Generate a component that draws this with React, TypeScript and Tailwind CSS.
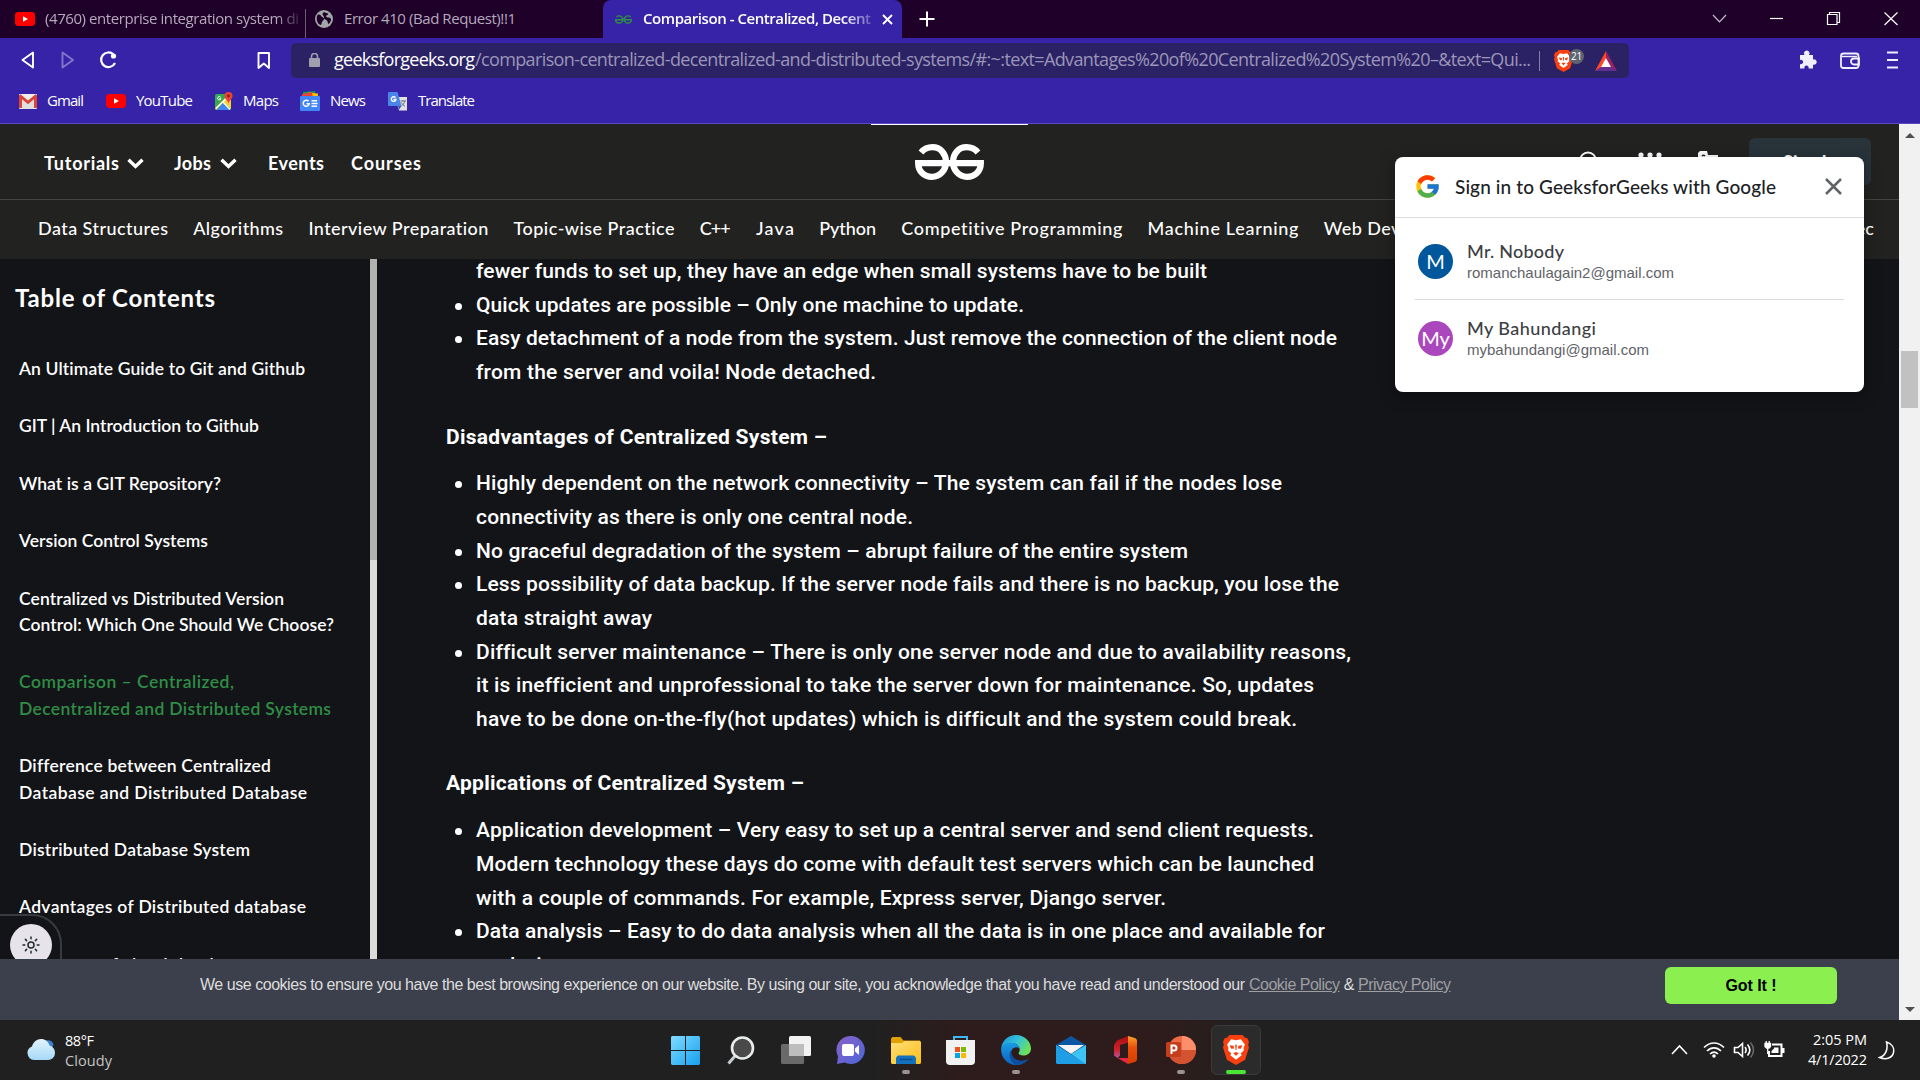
import { useLayoutEffect, useRef } from "react";
import { SiGeeksforgeeks } from "react-icons/si";
import { FcGoogle } from "react-icons/fc";

/** A single line of text whose tracking is adjusted so that it fills exactly `w` pixels. */
function Fit({ t, w, className = "" }: { t: string; w: number; className?: string }) {
  const outer = useRef<HTMLSpanElement>(null);
  const inner = useRef<HTMLSpanElement>(null);
  useLayoutEffect(() => {
    const el = inner.current;
    if (!el || !outer.current) return;
    el.style.letterSpacing = "0px";
    const natural = el.getBoundingClientRect().width;
    el.style.letterSpacing = `${(w - natural) / Math.max(1, t.length - 1)}px`;
    outer.current.style.width = `${w}px`;
  }, [t, w]);
  return (
    <span ref={outer} className={`block shrink-0 whitespace-pre ${className}`}>
      <span ref={inner} className="[font-variant-ligatures:none]">
        {t}
      </span>
    </span>
  );
}

function YouTubeIcon() {
  return (
    <svg className="h-[14px] w-5 shrink-0" viewBox="0 0 20 14">
      <rect width="20" height="14" rx="3.4" fill="#ff0000" />
      <path d="M8 4.2v5.6L13 7z" fill="#fff" />
    </svg>
  );
}

function BraveLion({ className }: { className: string }) {
  return (
    <svg className={className} viewBox="0 0 24 28" preserveAspectRatio="none">
      <path d="M6 0h12l2.300 2.600 2 .2L24 6.500l-.8 2.600.8 2.500-3.600 11.600L12 28l-8.400-4.800L0 11.600l.8-2.500L0 6.500l1.700-3.700 2-.2z" fill="#fb4010" />
      <path d="M12 5l4.500-1 3.700 4.800-1.200 3.400.3 2-3 3 1 1.800L12 23l-5.300-4 1-1.800-3-3 .3-2L3.800 8.800 7.500 4z" fill="#fff" />
      <path d="M6 9.500l3.800.6.4 2.400-2.600.4zM18 9.500l-3.800.6-.4 2.400 2.600.4zM9.300 17l2.700-1.200 2.700 1.200L12 19.300zM11.200 9h1.600l-.4 5h-.8z" fill="#fb4010" />
    </svg>
  );
}

function TabStrip() {
  return (
    <div className="flex h-[38px] bg-[#1e0029] text-[15px] leading-[36px] text-[#b5a9bd]">
      <div className="flex w-[305px] items-center pl-[15px]">
        <YouTubeIcon />
        <div className="ml-[10px] h-[38px] w-[254px] overflow-hidden [mask-image:linear-gradient(to_right,#000_91%,rgba(0,0,0,.2))]">
          <Fit t="(4760) enterprise integration system di" w={254} />
        </div>
      </div>
      <div className="mt-[9px] w-px bg-[#6c5c74]" />
      <div className="flex w-[297px] items-center pl-[9px]">
        <svg className="h-[18px] w-[18px] shrink-0" viewBox="0 0 18 18">
          <circle cx="9" cy="9" r="9" fill="#a3a6a8" />
          <path d="M3 4.500c1.500 0 3 .5 3.500 2 .5 1 2 .5 2.500 2s-1.500 2-2 3.500-.5 3-1.500 3C3 14 1.500 11 1.700 8c0-1.500.5-2.500 1.300-3.500zM9.500 2c1 1.200 2.800.8 3.500 1.500s-.2 1.500-1.500 2 0 2 1.500 2 2.500.5 3 1.500-.8 4-2.500 5c-1-.5-.5-2.500-1.500-3.500S8.500 9 9 7.500 7 5 7.500 4s1-2 2-2z" fill="#1e0029" />
        </svg>
        <Fit t="Error 410 (Bad Request)!!1" w={172} className="ml-[11px] h-[38px]" />
      </div>
      <div className="flex w-[299px] items-center rounded-t-lg bg-[#3623a7] pl-3">
        <SiGeeksforgeeks className="h-[17px] w-[17px] shrink-0 text-[#2f8d46]" />
        <div className="ml-[11px] h-[38px] w-[228px] overflow-hidden font-semibold text-white [mask-image:linear-gradient(to_right,#000_88%,rgba(0,0,0,.25))]">
          <Fit t="Comparison - Centralized, Decent" w={228} />
        </div>
        <svg className="ml-[11px] h-[11px] w-[11px] shrink-0" viewBox="0 0 11 11" stroke="#fff" strokeWidth="1.900">
          <path d="M1 1l9 9M10 1l-9 9" />
        </svg>
      </div>
      <svg className="ml-[17px] mt-[11px] h-4 w-4" viewBox="0 0 16 16" stroke="#fff" strokeWidth="2">
        <path d="M8 0.500v15M.500 8h15" />
      </svg>
      <svg className="ml-auto mr-[22px] h-[38px] w-[187px]" viewBox="0 0 187 38" fill="none" stroke="#fff" strokeWidth="1.200">
        <path d="M2 15l6.500 6.800L15 15" stroke="#c9bfce" />
        <path d="M59 18.500h13" />
        <path d="M116.500 14.500h9.500v10h-9.500zM118.500 14.500v-2h10v10h-2" />
        <path d="M173.500 12.500l13 12.500M186.500 12.500l-13 12.500" />
      </svg>
    </div>
  );
}

function Toolbar() {
  return (
    <div className="flex h-[45px] items-center">
      <svg className="h-[45px] w-[291px] shrink-0" viewBox="0 0 291 45" fill="none" stroke="#fff" strokeWidth="1.900" strokeLinejoin="round">
        <path d="M33 14.500v15L22.500 22z" />
        <path d="M62.500 14.500v15L73 22z" stroke="#8276cb" />
        <path d="M113.500 16.500a7.300 7.300 0 1 0 1.500 8.500" strokeWidth="2.200" />
        <circle cx="113.500" cy="18" r="2.600" fill="#fff" stroke="none" />
        <path d="M258.500 15h10.500v15l-5.200-4.500-5.300 4.500z" />
      </svg>
      <div className="flex h-[35px] w-[1338px] items-center rounded-[5px] bg-[#2b2265] pl-[18px] text-[18px] leading-[33px] text-[#9b96b8]">
        <svg className="h-[15px] w-[11px] shrink-0" viewBox="0 0 11 15">
          <rect y="5" width="11" height="9" rx="1" fill="#a09fae" />
          <path d="M2.500 6V3.500a3 3 0 0 1 6 0V6" fill="none" stroke="#a09fae" strokeWidth="1.600" />
        </svg>
        <Fit t="geeksforgeeks.org" w={141} className="ml-[14px] h-[35px] text-white" />
        <Fit
          t="/comparison-centralized-decentralized-and-distributed-systems/#:~:text=Advantages%20of%20Centralized%20System%20–&text=Qui..."
          w={1056}
          className="h-[35px]"
        />
        <div className="ml-2 h-5 w-px bg-[#8580a8]" />
        <div className="relative ml-[14px] h-[22px] w-[18px] shrink-0">
          <BraveLion className="h-[22px] w-[19px]" />
          <span className="absolute -top-px left-[15px] flex h-[15px] w-[15px] items-center justify-center rounded-full bg-[#5f6570] text-[10px] leading-none tracking-tight text-white">
            21
          </span>
        </div>
        <svg className="ml-[23px] h-5 w-[22px] shrink-0" viewBox="0 0 22 20">
          <path d="M11 0L0 20l11-6z" fill="#ff4724" />
          <path d="M11 0l11 20-11-6z" fill="#9e1f63" />
          <path d="M0 20h22l-6-4H6z" fill="#662d91" />
          <path d="M11 7l5 9H6z" fill="#fff" />
        </svg>
      </div>
      <svg className="ml-auto mr-[21px] h-[45px] w-[100px]" viewBox="0 0 100 45" fill="none" stroke="#f1effb">
        <path
          d="M1 17h4.500a2.800 2.800 0 1 1 4.500 0H14v4.500a2.700 2.700 0 1 1 0 5V30.500h-4.500a2.200 2.200 0 1 0-4 0H1v-4.500a2.200 2.200 0 1 0 0-4z"
          fill="#f1effb"
          stroke="none"
        />
        <rect x="42" y="15.500" width="17.500" height="14.500" rx="2.500" strokeWidth="1.800" />
        <path d="M43 18.500h15" strokeWidth="1.400" />
        <path d="M60 20.500h-5a3 3 0 0 0 0 6h5z" strokeWidth="1.800" />
        <path d="M88 14.500h11M88 22h11M88 29.500h11" strokeWidth="2" />
      </svg>
    </div>
  );
}

function BookmarksBar() {
  return (
    <div className="flex h-9 items-center pl-[19px] text-[15px] leading-[34px] text-white">
      <svg className="h-[15px] w-[18px]" viewBox="0 0 18 15">
        <rect width="18" height="15" rx="1" fill="#eee" />
        <path d="M3 15V5l6 5 6-5v10z" fill="#e0e0e0" />
        <path d="M0 1.500v12.500h3V5.200l6 5 6-5V14h3V1.500L16.500.3 9 6.500 1.500.300z" fill="#db4437" />
      </svg>
      <Fit t="Gmail" w={37} className="ml-[10px] h-9" />
      <div className="ml-[22px]">
        <YouTubeIcon />
      </div>
      <Fit t="YouTube" w={57} className="ml-[10px] h-9" />
      <svg className="ml-[22px] h-[19px] w-[19px]" viewBox="0 0 19 19">
        <rect y="2" width="16" height="16" rx="1.500" fill="#34a853" />
        <path d="M0 16L12 4l4 4v9L8 10l-7 8z" fill="#f5d23a" />
        <path d="M2 18l6-7 6 7z" fill="#4285f4" />
        <path d="M1 16.500L14 4M8 10l7 7.500" stroke="#fff" strokeWidth="1.300" />
        <path d="M13.500 0a4 4 0 0 1 4 4c0 3-3 4-4 7.500-1-3.500-4-4.500-4-7.500a4 4 0 0 1 4-4z" fill="#ea4335" />
        <circle cx="13.500" cy="4" r="1.400" fill="#8c1b14" />
        <path d="M5.700 5.200a1.700 1.700 0 1 0 .3 1.500H4.500" stroke="#fff" fill="none" />
      </svg>
      <Fit t="Maps" w={36} className="ml-[9px] h-9" />
      <svg className="ml-[21px] h-5 w-5" viewBox="0 0 20 20">
        <path d="M3 1l12-1v8H3z" fill="#0f9d58" />
        <path d="M8 1.500l10 1V8H8z" fill="#fbbc04" />
        <path d="M2 3l10-2 1 6H2z" fill="#ea4335" />
        <rect y="5" width="20" height="15" rx="1" fill="#4285f4" />
        <path d="M8.500 10.300a3 3 0 1 0 .7 2.500H6.500M11.500 9.800H17M11.500 12.500h6M11.500 15.200H17" stroke="#fff" strokeWidth="1.500" fill="none" />
      </svg>
      <Fit t="News" w={36} className="ml-[10px] h-9" />
      <svg className="ml-[22px] h-[19px] w-5" viewBox="0 0 20 19">
        <path d="M7 5h12v13.500h-8z" fill="#e2e2e2" />
        <path d="M1 0h8.500l4 14H1a1 1 0 0 1-1-1V1a1 1 0 0 1 1-1z" fill="#4a86e8" />
        <path d="M7.500 5.700a2.300 2.300 0 1 0 .4 1.800H5.500" stroke="#fff" strokeWidth="1.300" fill="none" />
        <path d="M12.500 9h5.500M15 8v1M16.800 9c-.5 2.500-2 4-3.300 4.800M13.500 10.500c1 2 2 3 3.500 3.800" stroke="#6b7280" strokeWidth="1" fill="none" />
        <path d="M10 14h3.500l-2.700 4z" fill="#3559c0" />
      </svg>
      <Fit t="Translate" w={57} className="ml-[10px] h-9" />
    </div>
  );
}

function Chevron({ className = "" }: { className?: string }) {
  return (
    <svg className={`h-[11px] w-[17px] ${className}`} viewBox="0 0 17 11" fill="none" stroke="#fff" strokeWidth="3.400">
      <path d="M1.500 1.700L8.500 8.500l7-6.800" />
    </svg>
  );
}

function SiteHeader() {
  return (
    <header className="w-full bg-[#222221] text-white">
      <div className="flex h-[76px] items-center border-b border-[#444443] pl-11 text-[18px] font-bold leading-6">
        <Fit t="Tutorials" w={75} className="pt-[3px]" />
        <Chevron className="ml-2 mt-[3px]" />
        <Fit t="Jobs" w={37} className="ml-[30px] pt-[3px]" />
        <Chevron className="ml-[9px] mt-[3px]" />
        <Fit t="Events" w={56} className="ml-[31px] pt-[3px]" />
        <Fit t="Courses" w={70} className="ml-[27px] pt-[3px]" />
        <div className="ml-[450px] flex h-full w-[157px] flex-col items-center">
          <div className="h-px w-full shrink-0 bg-white" />
          <svg className="mt-[19px] h-9 w-[69px]" viewBox="0 0 69 36" fill="none" stroke="#fff" strokeWidth="6.300">
            <path d="M6 8.500C9 5 13 3.200 17.500 3.200 25.500 3.200 31 10 31 18S25 32.800 17 32.800 3.200 27 3.200 19.200H65.800C65.800 27 60 32.800 52 32.800S38 26 38 18 43.500 3.200 51.500 3.200C56 3.200 60 5 63 8.500" />
          </svg>
        </div>
        <svg className="ml-[550px] mt-[2px] h-6 w-6" viewBox="0 0 24 24" fill="none" stroke="#fff" strokeWidth="2">
          <circle cx="10" cy="9.500" r="8" />
          <path d="M16 16l6 6" />
        </svg>
        <svg className="ml-[36px] mt-[2px] h-6 w-6" viewBox="0 0 24 24" fill="#fff">
          <circle cx="3" cy="4" r="2.600" />
          <circle cx="12" cy="4" r="2.600" />
          <circle cx="21" cy="4" r="2.600" />
        </svg>
        <svg className="ml-[36px] mt-[2px] h-6 w-6" viewBox="0 0 24 24" fill="#fff">
          <path d="M2 0h7l1 4h10v16H11L9 14H0V2z" />
          <path d="M4 5a2 2 0 0 1 3 0" fill="none" stroke="#222221" strokeWidth="1.400" />
        </svg>
        <div className="ml-auto mr-7 h-[47px] w-[122px] rounded-md bg-[#28333a] pt-[12px] text-center text-[18px]">Sign In</div>
      </div>
      <nav className="mr-[25px] flex h-[59px] items-center gap-[25.200px] overflow-hidden pb-[2px] pl-[38px] text-[18px] font-medium">
        <Fit t="Data Structures" w={130} />
        <Fit t="Algorithms" w={90} />
        <Fit t="Interview Preparation" w={180} />
        <Fit t="Topic-wise Practice" w={161} />
        <Fit t="C++" w={31} />
        <Fit t="Java" w={38} />
        <Fit t="Python" w={57} />
        <Fit t="Competitive Programming" w={221} />
        <Fit t="Machine Learning" w={151} />
        <Fit t="Web Development" w={155} />
        <Fit t="Puzzles" w={62} />
        <Fit t="School Learning" w={128} />
        <Fit t="Projec" w={50} className="ml-auto" />
      </nav>
    </header>
  );
}

const contents: { lines: [string, number][]; active?: boolean }[] = [
  { lines: [["An Ultimate Guide to Git and Github", 286]] },
  { lines: [["GIT | An Introduction to Github", 240]] },
  { lines: [["What is a GIT Repository?", 202]] },
  { lines: [["Version Control Systems", 189]] },
  { lines: [["Centralized vs Distributed Version", 265], ["Control: Which One Should We Choose?", 315]] },
  { lines: [["Comparison – Centralized,", 215], ["Decentralized and Distributed Systems", 312]], active: true },
  { lines: [["Difference between Centralized", 252], ["Database and Distributed Database", 288]] },
  { lines: [["Distributed Database System", 231]] },
  { lines: [["Advantages of Distributed database", 287]] },
  { lines: [["Concepts of cloud databases", 236]] },
];

function Sidebar() {
  return (
    <aside className="flex w-[377px] shrink-0 justify-between overflow-hidden text-white">
      <div>
        <h2 className="ml-[15px] mt-[23px] h-8 text-[24px] font-bold leading-8">
          <Fit t="Table of Contents" w={200} />
        </h2>
        <ul className="ml-[19px] mt-[42px] flex flex-col gap-[31px] text-[17.500px] font-semibold leading-[26.400px]">
          {contents.map((item) => (
            <li key={item.lines[0][0]} className={item.active ? "text-[#2f8d46]" : ""}>
              {item.lines.map(([t, w]) => (
                <Fit key={t} t={t} w={w} />
              ))}
            </li>
          ))}
        </ul>
      </div>
      <div className="w-[7px] bg-[#dcdddb]">
        <div className="h-[301px] bg-[#b1b1b0]" />
      </div>
    </aside>
  );
}

type Line = [string, number];

function Bullets({ items }: { items: { cont?: boolean; lines: Line[] }[] }) {
  return (
    <ul className="text-[21px] font-medium leading-[33.650px]">
      {items.map((item) => (
        <li key={item.lines[0][0]} className="flex">
          <span className={`ml-[9px] mt-[14px] h-[7px] w-[7px] rounded-full ${item.cont ? "" : "bg-white"}`} />
          <div className="ml-[14px]">
            {item.lines.map(([t, w]) => (
              <Fit key={t} t={t} w={w} />
            ))}
          </div>
        </li>
      ))}
    </ul>
  );
}

function Heading({ t, w, className }: { t: string; w: number; className: string }) {
  return (
    <h3 className={`text-[21px] font-bold leading-[33.650px] ${className}`}>
      <Fit t={t} w={w} />
    </h3>
  );
}

function Article() {
  return (
    <main className="ml-[69px] mt-[-4px] w-[920px] font-['Roboto',sans-serif] text-white">
      <Bullets
        items={[
          { cont: true, lines: [["fewer funds to set up, they have an edge when small systems have to be built", 731]] },
          { lines: [["Quick updates are possible – Only one machine to update.", 548]] },
          {
            lines: [
              ["Easy detachment of a node from the system. Just remove the connection of the client node", 861],
              ["from the server and voila! Node detached.", 400],
            ],
          },
        ]}
      />
      <Heading t="Disadvantages of Centralized System –" w={381} className="mt-[31px]" />
      <div className="h-[13px]" />
      <Bullets
        items={[
          {
            lines: [
              ["Highly dependent on the network connectivity – The system can fail if the nodes lose", 806],
              ["connectivity as there is only one central node.", 437],
            ],
          },
          { lines: [["No graceful degradation of the system – abrupt failure of the entire system", 712]] },
          {
            lines: [
              ["Less possibility of data backup. If the server node fails and there is no backup, you lose the", 863],
              ["data straight away", 176],
            ],
          },
          {
            lines: [
              ["Difficult server maintenance – There is only one server node and due to availability reasons,", 875],
              ["it is inefficient and unprofessional to take the server down for maintenance. So, updates", 838],
              ["have to be done on-the-fly(hot updates) which is difficult and the system could break.", 821],
            ],
          },
        ]}
      />
      <Heading t="Applications of Centralized System –" w={358} className="mt-[30px]" />
      <div className="h-[14px]" />
      <Bullets
        items={[
          {
            lines: [
              ["Application development – Very easy to set up a central server and send client requests.", 838],
              ["Modern technology these days do come with default test servers which can be launched", 838],
              ["with a couple of commands. For example, Express server, Django server.", 690],
            ],
          },
          {
            lines: [
              ["Data analysis – Easy to do data analysis when all the data is in one place and available for", 849],
              ["analysis.", 82],
            ],
          },
        ]}
      />
    </main>
  );
}

function Account({ initial, color, name, nw, mail, mw }: { initial: string; color: string; name: string; nw: number; mail: string; mw: number }) {
  return (
    <div className="flex items-center">
      <span className={`flex h-[35px] w-[35px] items-center justify-center rounded-full pb-[2px] text-[20px] text-white ${color}`}>{initial}</span>
      <div className="ml-[14px]">
        <Fit t={name} w={nw} className="text-[18px] font-medium leading-[22px] text-[#3c4043]" />
        <Fit t={mail} w={mw} className="font-['Liberation_Sans',sans-serif] text-[15px] leading-[22px] text-[#5f6368]" />
      </div>
    </div>
  );
}

function SignInPopup() {
  return (
    <div className="absolute left-[1395px] top-[33px] h-[235px] w-[469px] rounded-lg bg-white font-['Lato',sans-serif] shadow-[0_4px_16px_rgba(0,0,0,.35)]">
      <div className="flex h-[61px] items-center border-b border-[#dadce0] pb-px pl-[19px]">
        <FcGoogle className="h-[27px] w-[27px]" />
        <Fit t="Sign in to GeeksforGeeks with Google" w={321} className="ml-[14px] pt-px text-[19px] font-medium text-[#202124]" />
        <svg className="ml-[49px] h-[17px] w-[17px]" viewBox="0 0 17 17" stroke="#5f6368" strokeWidth="2.500">
          <path d="M1 1l15 15M16 1L1 16" />
        </svg>
      </div>
      <div className="mx-5 flex h-[82px] items-center border-b border-[#dadce0] pl-[3px] pt-[6px]">
        <Account initial="M" color="bg-[#01579b]" name="Mr. Nobody" nw={97} mail="romanchaulagain2@gmail.com" mw={207} />
      </div>
      <div className="mx-5 flex h-[77px] items-center pl-[3px]">
        <Account initial="My" color="bg-[#ab47bc]" name="My Bahundangi" nw={129} mail="mybahundangi@gmail.com" mw={182} />
      </div>
    </div>
  );
}

function CookieBar() {
  return (
    <div className="flex h-[61px] w-[1899px] bg-[#3c404c] pl-[200px] pt-2 font-['Liberation_Sans',sans-serif] text-[16px] leading-[36px] text-[#dcdcdc]">
      <Fit
        t="We use cookies to ensure you have the best browsing experience on our website. By using our site, you acknowledge that you have read and understood our "
        w={1049}
      />
      <Fit t="Cookie Policy" w={91} className="text-[#9f9fa1] underline" />
      <Fit t=" & " w={18} />
      <Fit t="Privacy Policy" w={93} className="text-[#9f9fa1] underline" />
      <div className="ml-[214px] flex h-[37px] w-[172px] items-center justify-center rounded-md bg-[#8bf04f] text-[16px] font-bold text-black">
        <Fit t="Got It !" w={51} />
      </div>
    </div>
  );
}

function Dot() {
  return <span className="absolute left-1/2 top-[45px] h-1 w-2 -translate-x-1/2 rounded-full bg-[#9b9393]" />;
}

function TaskIcons() {
  return (
    <div className="flex h-[60px] pt-[5px]">
      <div className="flex w-[55px] justify-center pt-[11px]">
        <svg className="h-[29px] w-[29px]" viewBox="0 0 29 29">
          <defs>
            <linearGradient id="win" x1="0" y1="0" x2="1" y2="1">
              <stop offset="0" stopColor="#7fdcff" />
              <stop offset="1" stopColor="#16a0f0" />
            </linearGradient>
          </defs>
          <path d="M1 0h13v14H0V1zM15 0h13l1 1v13H15zM0 15h14v14H1l-1-1zM15 15h14v13l-1 1H15z" fill="url(#win)" />
        </svg>
      </div>
      <div className="flex w-[55px] justify-center pt-[11px]">
        <svg className="h-[29px] w-7" viewBox="0 0 28 29" fill="none">
          <path d="M8 20L1.500 27.500" stroke="#c9ced1" strokeWidth="3" />
          <circle cx="15.500" cy="12" r="10.500" fill="#4a4a4a" stroke="#e9eced" strokeWidth="2.600" />
        </svg>
      </div>
      <div className="flex w-[55px] justify-center pt-[11px]">
        <svg className="h-7 w-[30px]" viewBox="0 0 30 28">
          <rect y="8" width="23" height="20" rx="1.500" fill="#6a6a6a" />
          <rect x="8" width="22" height="20" rx="1.500" fill="#f2f2f2" />
          <path d="M8 8h15v12H8z" fill="#bdbdbd" />
        </svg>
      </div>
      <div className="flex w-[55px] justify-center pt-[11px]">
        <svg className="h-7 w-[29px]" viewBox="0 0 29 28">
          <defs>
            <linearGradient id="chat" x1="0" y1="0" x2="1" y2="1">
              <stop offset="0" stopColor="#8b62c9" />
              <stop offset="1" stopColor="#4a66d8" />
            </linearGradient>
          </defs>
          <path d="M14.500 0a14 14 0 1 1-6 26.500L1 28l1-7.500A14 14 0 0 1 14.500 0z" fill="url(#chat)" />
          <rect x="6" y="8" width="12" height="12" rx="2" fill="#fff" />
          <path d="M19 12.500l4-3.500v10l-4-3.500z" fill="#fff" />
        </svg>
      </div>
      <div className="relative flex w-[55px] justify-center pt-[12px]">
        <svg className="h-[27px] w-[30px]" viewBox="0 0 30 27">
          <defs>
            <linearGradient id="folder" x1="0" y1="0" x2="1" y2="1">
              <stop offset="0" stopColor="#ffe07a" />
              <stop offset="1" stopColor="#fbbd16" />
            </linearGradient>
          </defs>
          <path d="M0 1.500L1.500 0h8l3 3.500H29V12H0z" fill="#e0a000" />
          <path d="M0 6h11l2.500-2H29l1 1v21l-1 1H1l-1-1z" fill="url(#folder)" />
          <path d="M5 27v-6.500L7 18.500h16l2 2V27z" fill="#1272bd" />
          <path d="M8.500 22.500h13" stroke="#0a4d8c" strokeWidth="1.400" />
        </svg>
        <Dot />
      </div>
      <div className="flex w-[55px] justify-center pt-[11px]">
        <svg className="h-[29px] w-[29px]" viewBox="0 0 29 29">
          <path d="M8 5V1h13v4" fill="none" stroke="#3cb9f0" strokeWidth="2" />
          <path d="M0 4h29v21a4 4 0 0 1-4 4H4a4 4 0 0 1-4-4z" fill="#f2f2f2" />
          <path d="M9 11h5v5H9z" fill="#f25022" />
          <path d="M15 11h5v5h-5z" fill="#7fba00" />
          <path d="M9 17h5v5H9z" fill="#00a4ef" />
          <path d="M15 17h5v5h-5z" fill="#ffb900" />
        </svg>
      </div>
      <div className="relative flex w-[55px] justify-center pt-[10px]">
        <svg className="h-[30px] w-[30px]" viewBox="0 0 30 30">
          <defs>
            <linearGradient id="edge" x1="0" y1="0" x2="1" y2=".5">
              <stop offset="0" stopColor="#1693dc" />
              <stop offset=".55" stopColor="#35c3da" />
              <stop offset="1" stopColor="#6be05c" />
            </linearGradient>
            <linearGradient id="edgeBody" x1="0" y1="0" x2="0" y2="1">
              <stop offset="0" stopColor="#1b9be6" />
              <stop offset="1" stopColor="#0c62bd" />
            </linearGradient>
          </defs>
          <path d="M.300 12.500C1.500 5 7.500 0 15 0c8.500 0 15 6.500 15 13.500 0 4.500-3.500 7-7.500 7-3 0-5-1-5-2.200 0-.8 1.200-1.500 1.200-3.800C18.700 11 15.500 8 11 8 6 8 2.500 10 .3 12.500z" fill="url(#edge)" />
          <path d="M.300 12.500C2 9.500 6 7.700 10 7.700c5 0 8.700 3.300 8.700 6.500-1-2.200-6-3-8 1-2.500 5 1.300 10.300 6.800 11.300 3.500.6 7-.6 9.800-2.800C24.500 27.800 20 30 15 30 6 30-1 22 .300 12.500z" fill="url(#edgeBody)" />
          <path d="M10.200 15c-3.500 5.500-.7 13 5.300 15 4.800-.2 9.500-2.700 12-6.500-2.800 2-6 2.600-9 2-5.500-1-8.500-5-8.300-10.500z" fill="#0d4f9e" />
        </svg>
        <Dot />
      </div>
      <div className="flex w-[55px] justify-center pt-[11px]">
        <svg className="h-[28px] w-[30px]" viewBox="0 0 30 28">
          <path d="M0 9L15 0l15 9v6H0z" fill="#0b56a3" />
          <path d="M2 9h26L15 18z" fill="#f4f4f4" />
          <path d="M0 9l30 18.500-1 .5H1l-1-1z" fill="#1f9ee6" />
          <path d="M30 9L15 18l14.500 10 .5-1z" fill="#3cc4f7" />
        </svg>
      </div>
      <div className="flex w-[55px] justify-center pt-[11px]">
        <svg className="h-7 w-[23px]" viewBox="0 0 23 28">
          <defs>
            <linearGradient id="office" x1="0" y1="0" x2="0" y2="1">
              <stop offset="0" stopColor="#a80f14" />
              <stop offset=".6" stopColor="#cf2027" />
              <stop offset="1" stopColor="#b0579c" />
            </linearGradient>
            <linearGradient id="officeSide" x1="0" y1="0" x2="0" y2="1">
              <stop offset="0" stopColor="#ffa42b" />
              <stop offset=".4" stopColor="#e8500a" />
              <stop offset="1" stopColor="#d63c02" />
            </linearGradient>
          </defs>
          <path d="M14 0L3 4.500 0 9v10.500L3.500 22 6 19.500V9l8-2.500z" fill="url(#office)" />
          <path d="M3.500 22L14 28v-6z" fill="#ea2844" />
          <path d="M14 0l7.500 2.300L23 4v20l-1.500 1.700L14 28z" fill="url(#officeSide)" />
        </svg>
      </div>
      <div className="relative flex w-[55px] justify-center pt-[11px]">
        <svg className="h-[28px] w-[30px]" viewBox="0 0 30 28">
          <circle cx="16" cy="14" r="14" fill="#ed6c47" />
          <path d="M16 0a14 14 0 0 1 14 14H16z" fill="#ff8f6b" />
          <path d="M16 14h14a14 14 0 0 1-28 0z" fill="#d35230" />
          <rect y="6" width="15" height="15" rx="1.500" fill="#c43e1c" />
          <path d="M5.500 18v-8.500H8a2.500 2.500 0 0 1 0 5H5.500" stroke="#fff" strokeWidth="2" fill="none" />
        </svg>
        <Dot />
      </div>
      <div className="relative ml-[3px] flex h-[50px] w-[50px] justify-center rounded-md border border-[#3b3a3a] bg-[#2c2b2b] pt-[9px]">
        <BraveLion className="h-[30px] w-[26px]" />
        <span className="absolute left-[14px] top-[44px] h-1 w-5 rounded-full bg-[#4be534]" />
      </div>
    </div>
  );
}

function Taskbar() {
  return (
    <footer className="flex h-[60px] bg-[#202020] text-[14.500px] text-white">
      <div className="flex w-[658px] pl-[27px] pt-[11px]">
        <svg className="mt-2 h-[21px] w-7" viewBox="0 0 28 21">
          <defs>
            <linearGradient id="cloud" x1="0" y1="0" x2="0" y2="1">
              <stop offset="0" stopColor="#e3f3fd" />
              <stop offset="1" stopColor="#a6d9f8" />
            </linearGradient>
          </defs>
          <path d="M17 2c5-2 9 0 9.500 4l-3 5z" fill="#3b82d0" />
          <path d="M7 21a7 7 0 0 1-2-13.500C6 3 10 0 14 0s7.500 2.500 8.500 6.500C26 7.500 28 10.500 28 14a7 7 0 0 1-7 7z" fill="url(#cloud)" />
        </svg>
        <div className="ml-[10px] leading-5">
          <Fit t="88°F" w={29} />
          <Fit t="Cloudy" w={47} className="text-[#c4c4c4]" />
        </div>
      </div>
      <div className="bg-[linear-gradient(to_right,transparent_35%,#2e1c1c_50%,#2e1c1c_85%,transparent)]">
        <TaskIcons />
      </div>
      <div className="ml-auto flex">
        <svg className="h-[60px] w-[115px]" viewBox="1 0 115 60" fill="none" stroke="#fff" strokeWidth="1.600">
          <path d="M2 34l7.500-8 7.500 8" />
          <path d="M34 27.500c6-6 14-6 20 0M37 31c4.200-4.200 9.800-4.200 14 0M40 34c2.500-2.300 5.500-2.300 8 0" />
          <circle cx="44" cy="36" r="1.800" fill="#fff" stroke="none" />
          <path d="M64.500 27.500h3.500l4.500-4v13l-4.500-4h-3.500zM75 27c1.500 2 1.500 4 0 6" />
          <path d="M77.500 24.500c3 3.500 3 7.500 0 11" />
          <path d="M80.500 22.500c4 4.500 4 10.500 0 15" stroke="#666" />
          <path d="M102 24.500h9.500v11.500H99V31M113.500 28v5" strokeWidth="2" />
          <path d="M104 27.500h4.500v5.500H101.500V31l2.500-2.500z" fill="#fff" stroke="none" />
          <path d="M95 23.500h5.500v3l-1.500 1.500h-2.500L95 26.500zM97.700 28v6M96.200 21v3M99.200 21v3" fill="#fff" strokeWidth="1.300" />
        </svg>
        <div className="ml-[22px] flex w-[59px] flex-col items-end pt-[10px] leading-5">
          <Fit t="2:05 PM" w={54} />
          <Fit t="4/1/2022" w={59} />
        </div>
        <svg className="ml-[11px] mr-6 mt-[21px] h-[19px] w-[18px]" viewBox="0 0 18 19" fill="none" stroke="#fff" strokeWidth="1.500">
          <path d="M8.500 1c5 1.500 8 5.500 7 10.500-1 5-7 8-14 5C7 15 10.500 9 8.500 1z" />
        </svg>
      </div>
    </footer>
  );
}

export default function App() {
  return (
    <div className="h-[1080px] w-[1920px] overflow-hidden bg-[#131418] font-['Open_Sans',sans-serif]">
      <div className="h-[124px] border-b border-[#5a49c4] bg-[#3623a7]">
        <TabStrip />
        <Toolbar />
        <BookmarksBar />
      </div>
      <div className="relative flex h-[896px] overflow-hidden font-['Lato',sans-serif]">
        <div className="flex w-[1899px] flex-col">
          <SiteHeader />
          <div className="flex h-[700px] overflow-hidden">
            <Sidebar />
            <Article />
          </div>
          <CookieBar />
        </div>
        <div className="flex w-[21px] flex-col items-center bg-[#f1f1f1]">
          <span className="mt-[9px] border-x-[5px] border-b-[5px] border-x-transparent border-b-[#505050]" />
          <div className="mt-[213px] h-[57px] w-[17px] bg-[#c1c1c1]" />
          <span className="mb-[8px] mt-auto border-x-[5px] border-t-[5px] border-x-transparent border-t-[#505050]" />
        </div>
        <SignInPopup />
        <div className="absolute left-0 top-[790px] h-[45px] w-[63px] overflow-hidden">
          <div className="ml-[-8px] h-[68px] w-[70px] rounded-tr-[30px] border-2 border-[#3a3b40] bg-[#131418] pl-4 pt-2">
            <div className="flex h-[42px] w-[42px] items-center justify-center rounded-full bg-[#e6e4ea]">
              <svg className="h-[18px] w-[18px]" viewBox="0 0 18 18" fill="none" stroke="#222b2b" strokeWidth="1.500" strokeLinecap="round">
                <circle cx="9" cy="9" r="3" />
                <path d="M9 1v1.800M9 15.200V17M1 9h1.800M15.200 9H17M3.400 3.400l1.200 1.200M13.400 13.400l1.200 1.200M3.400 14.600l1.200-1.200M13.400 4.600l1.200-1.200" />
              </svg>
            </div>
          </div>
        </div>
      </div>
      <Taskbar />
    </div>
  );
}
